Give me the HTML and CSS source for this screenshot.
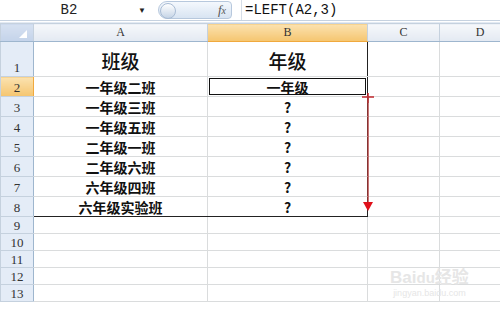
FILE: index.html
```html
<!DOCTYPE html>
<html lang="zh-CN">
<head>
  <meta charset="UTF-8" />
  <title>LEFT</title>
  <link rel="stylesheet" href="styles.css">
</head>
<body>
  <div class="formula-bar">
    <div class="name-box">B2</div>
    <div class="name-arrow">&#9660;</div>
    <div class="fx-box">
      <span class="fx-knob"></span>
      <span class="fx">f<i>x</i></span>
    </div>
    <div class="formula">=LEFT(A2,3)</div>
  </div>

  <div class="sheet">
    <table>
      <colgroup>
        <col class="c-hdr"><col class="c-a"><col class="c-b"><col class="c-c"><col class="c-d">
      </colgroup>
      <tr class="col-head">
        <th class="corner"><span class="tri"></span></th>
        <th>A</th>
        <th class="on">B</th>
        <th>C</th>
        <th>D</th>
      </tr>
      <tr class="r-title">
        <th class="rh">1</th>
        <td class="t title">班级</td>
        <td class="t title tr">年级</td>
        <td></td><td></td>
      </tr>
      <tr class="r">
        <th class="rh on">2</th>
        <td class="t">一年级二班</td>
        <td class="t tr sel">一年级</td>
        <td></td><td></td>
      </tr>
      <tr class="r"><th class="rh">3</th><td class="t">一年级三班</td><td class="t tr">?</td><td></td><td></td></tr>
      <tr class="r"><th class="rh">4</th><td class="t">一年级五班</td><td class="t tr">?</td><td></td><td></td></tr>
      <tr class="r"><th class="rh">5</th><td class="t">二年级一班</td><td class="t tr">?</td><td></td><td></td></tr>
      <tr class="r"><th class="rh">6</th><td class="t">二年级六班</td><td class="t tr">?</td><td></td><td></td></tr>
      <tr class="r"><th class="rh">7</th><td class="t">六年级四班</td><td class="t tr">?</td><td></td><td></td></tr>
      <tr class="r"><th class="rh">8</th><td class="t tb">六年级实验班</td><td class="t tr tb">?</td><td></td><td></td></tr>
      <tr class="e"><th class="rh">9</th><td></td><td></td><td></td><td></td></tr>
      <tr class="e"><th class="rh">10</th><td></td><td></td><td></td><td></td></tr>
      <tr class="e"><th class="rh">11</th><td></td><td></td><td></td><td></td></tr>
      <tr class="e"><th class="rh">12</th><td></td><td></td><td></td><td></td></tr>
      <tr class="e"><th class="rh">13</th><td></td><td></td><td></td><td></td></tr>
    </table>

    <!-- drag arrow drawn over the sheet -->
    <svg class="drag" width="20" height="130" viewBox="0 0 20 130">
      <path d="M4 4 L16 4 M10 -2 L10 10" stroke="#c0272d" stroke-width="1.5" fill="none"/>
      <path d="M10 4 L10 112" stroke="#b03a3a" stroke-width="1.4"/>
      <path d="M5 109 L15 109 L10 118 Z" fill="#e0101a"/>
    </svg>

    <div class="watermark">
      <div class="wm-logo">Bai<span>du</span>经验</div>
      <div class="wm-url">jingyan.baidu.com</div>
    </div>
  </div>
</body>
</html>
```

FILE: styles.css
```css
body { margin: 0; background: #fff; font-family: "Liberation Sans", "Noto Sans CJK SC", sans-serif; overflow: hidden; }

.formula-bar { height: 20px; display: flex; align-items: center; background: #fff; border-bottom: 1px solid #c6d2e0; }
.name-box { width: 138px; text-align: center; font-family: "Liberation Mono", monospace; font-size: 14px; color: #222; }
.name-arrow { width: 20px; font-size: 8px; color: #222; text-align: left; }
.fx-box { position: relative; width: 74px; height: 18px; border-radius: 9px 4px 4px 9px; background: linear-gradient(#f4f8fd, #d8e4f2); border: 1px solid #b7c8dd; display: flex; align-items: center; justify-content: flex-end; box-sizing: border-box; }
.fx-knob { position: absolute; left: 1px; top: 1px; width: 14px; height: 14px; border-radius: 50%; background: linear-gradient(#ffffff, #c5d4e6); border: 1px solid #a9bcd4; }
.fx { font-family: "Liberation Serif", serif; font-style: italic; font-size: 13px; color: #555; padding-right: 5px; }
.fx i { font-size: 10px; }
.formula { margin-left: 9px; padding-left: 3px; border-left: 1px solid #d6dee8; font-family: "Liberation Mono", "Noto Sans CJK SC", monospace; font-size: 14px; color: #111; height: 20px; line-height: 20px; }

.sheet { position: relative; margin-top: 1px; border-top: 1px solid #e3eaf3; }
table { border-collapse: collapse; table-layout: fixed; width: 520px; }
.c-hdr { width: 33px; }
.c-a { width: 174px; }
.c-b { width: 160px; }
.c-c { width: 72px; }
.c-d { width: 81px; }

td, th { padding: 0; border: 1px solid #dadcdd; }
.col-head th { height: 17px; font-weight: normal; font-size: 12px; color: #333; font-family: "Liberation Serif", serif; background: linear-gradient(#f6f8fb, #e3e9f2); border: 1px solid #c5d1de; border-bottom-color: #9eb6ce; }
.col-head th.on { background: linear-gradient(#fbe2b0, #f5c56f); border-bottom-color: #f0a93e; }
.corner { position: relative; background: linear-gradient(#d6e1f1, #c4d3ea) !important; }
.tri { position: absolute; right: 6px; bottom: 3px; width: 0; height: 0; border-left: 8px solid transparent; border-bottom: 8px solid #fff; }

.rh { background: #e4ecf7; border: 1px solid #c5d1de; border-right-color: #9eb6ce; font-weight: normal; font-family: "Liberation Serif", serif; font-size: 13px; color: #333; text-align: center; vertical-align: bottom; }
.rh.on { background: linear-gradient(#fbe2b0, #f5c56f); border-right-color: #f0a93e; }

.r-title { height: 35px; }
.r { height: 20px; }
.e { height: 17px; }
.e .rh { font-size: 13px; line-height: 15px; }

.t { text-align: center; font-family: "Noto Sans CJK SC", sans-serif; font-weight: bold; font-size: 14px; color: #111; line-height: 16px; border-top: 1.5px solid #222; }
.tr { border-left-color: #222; border-right: 1.5px solid #222; }
.tb { border-bottom: 1.5px solid #222; }
.title { border-top-color: #dadcdd; font-size: 19px; font-weight: 500; vertical-align: bottom; padding-bottom: 4px; line-height: 22px; }
.sel { box-shadow: inset 0 0 0 1px #fff, inset 0 0 0 2px #111; }

.drag { position: absolute; left: 358px; top: 70px; }

.watermark { position: absolute; left: 390px; top: 245px; color: #e6e6e6; text-align: center; white-space: nowrap; }
.wm-logo { font-family: "Liberation Sans", "Noto Sans CJK SC", sans-serif; font-size: 17px; font-weight: bold; line-height: 20px; }
.wm-logo span { font-size: 15px; }
.wm-url { font-size: 9px; line-height: 11px; }
```
